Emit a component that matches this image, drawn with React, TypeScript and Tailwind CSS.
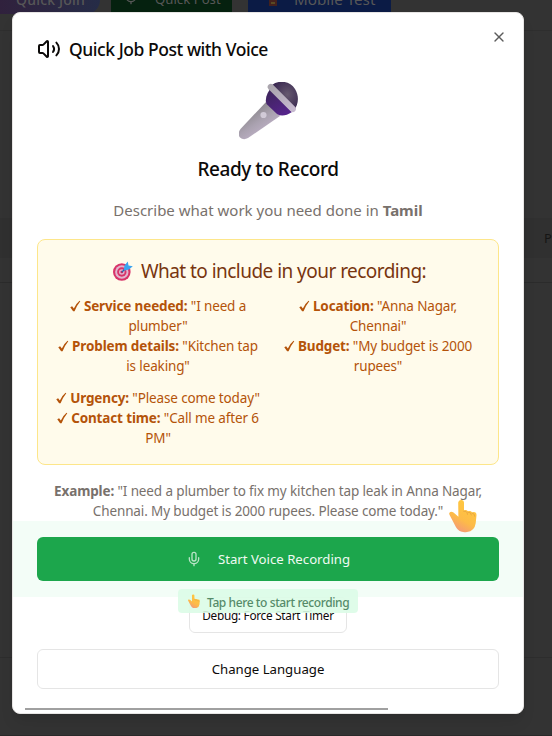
import React from "react";
import { Mic, Volume2, X } from "lucide-react";

function Microphone() {
  return (
    <svg width="60" height="58" viewBox="0 0 60 58" className="ml-0.5 block">
      <defs>
        <linearGradient id="micBody" x1="0.3" y1="0.2" x2="0.75" y2="0.8">
          <stop offset="0" stopColor="#8a868b" />
          <stop offset="0.5" stopColor="#aaa2b0" />
          <stop offset="1" stopColor="#c0b2c9" />
        </linearGradient>
        <radialGradient id="micHead" cx="0.6" cy="0.45" r="0.6">
          <stop offset="0" stopColor="#66596f" />
          <stop offset="1" stopColor="#3a2851" />
        </radialGradient>
        <linearGradient id="micNeck" x1="0" y1="0" x2="0.6" y2="1">
          <stop offset="0" stopColor="#3b2557" />
          <stop offset="1" stopColor="#55248a" />
        </linearGradient>
        <linearGradient id="micBand" x1="0" y1="0" x2="1" y2="1">
          <stop offset="0" stopColor="#aaa5ad" />
          <stop offset="1" stopColor="#c6b9cf" />
        </linearGradient>
      </defs>
      <path d="M27 20 L1.5 47 Q-2 52 1 55.5 Q4.5 58.5 9 56 L41 34 Z" fill="url(#micBody)" />
      <path d="M31 7 Q25 16 27.5 22 L38 32 Q44 36 53 30 Z" fill="url(#micNeck)" />
      <path d="M33 3 C40 -2.5 51 -1 56 7 C60.5 14 59.5 23 55 28 Z" fill="url(#micHead)" />
      <path d="M31.8 5 L53.8 27" stroke="url(#micBand)" strokeWidth="6.2" strokeLinecap="round" />
      <circle cx="24.5" cy="33" r="3.1" fill="#d1cad7" />
    </svg>
  );
}

function Target() {
  return (
    <svg width="20" height="20" viewBox="0 0 20 20" className="block shrink-0">
      <circle cx="8.8" cy="11" r="8.8" fill="#d83469" />
      <circle cx="8.8" cy="11" r="6.7" fill="#e2b5ce" />
      <circle cx="8.8" cy="11" r="4.7" fill="#d83469" />
      <circle cx="8.8" cy="11" r="2.8" fill="#dfb3cc" />
      <circle cx="8.8" cy="11" r="1.3" fill="#c52861" />
      <path d="M9 11 L15 5" stroke="#2466b0" strokeWidth="1.3" />
      <path d="M10.8 8.2 L11.5 4.5 L14.8 0.6 L15.5 4.4 L19.8 5.2 L16 8.6 L11.6 9.4 Z" fill="#3ba4ef" />
    </svg>
  );
}

function PointingHand({ size, id }: { size: number; id: string }) {
  return (
    <svg width={size} height={size * 1.2} viewBox="0 0 28 33" className="block shrink-0">
      <defs>
        <linearGradient id={id} x1="0.8" y1="0.1" x2="0.35" y2="1">
          <stop offset="0" stopColor="#ffc83f" />
          <stop offset="0.6" stopColor="#fdbb48" />
          <stop offset="1" stopColor="#f4977a" />
        </linearGradient>
      </defs>
      <path
        d="M9.2 3.2 Q9.5 .4 12.2 .6 Q15 .8 15 3.5 L15 11 Q17 10 19 12 Q21.6 11 23 13 Q27.6 11.8 27.5 16 L26.7 24 Q25.5 32 18 32.7 Q10.5 34 7 28 L1 16.5 Q-.8 13.7 1.3 12.7 Q3.6 12 6 14.5 L9.4 17.4 Z"
        fill={`url(#${id})`}
      />
      <path d="M14.8 12 Q18 11 18.5 15 M18.9 12.8 Q22 12.5 22.5 15.7 M23 13.8 Q25.8 13.8 25.8 17" fill="none" stroke="#e9a53f" strokeWidth="0.9" strokeLinecap="round" />
    </svg>
  );
}

function Check() {
  return (
    <svg width="11" height="12" viewBox="0 0 12 12" className="mr-[3px] inline-block align-[-1px]">
      <path d="M0.3 7.4 L2.3 6.2 L4.2 8.8 Q6.6 3.4 10.4 0.3 L11.2 0.8 Q7.4 5.5 5 11.6 L3.4 11.6 Z" fill="currentColor" />
    </svg>
  );
}

type Tip = { label: string; first: string; second?: string };

function TipItem({ label, first, second }: Tip) {
  return (
    <div className="whitespace-nowrap text-center leading-5">
      <Check />
      <b className="font-bold">{label}</b> {first}
      {second && (
        <>
          <br />
          {second}
        </>
      )}
    </div>
  );
}

export default function App() {
  return (
    <div className="relative h-[736px] w-[552px] overflow-hidden bg-[#333333] font-['Noto_Sans','Open_Sans',sans-serif] text-[#0c0a09]">
      <div className="flex h-[31px] items-start border-b border-[#2e2e2e] leading-none text-[#575757]">
        <div className="h-[14px] w-[100px] rounded-br-[14px] bg-linear-to-r from-[#30213d] to-[#252c47] pl-4">
          <span className="-mt-[7px] block whitespace-nowrap text-[14px] font-medium tracking-[0.2px]">Quick Join</span>
        </div>
        <div className="ml-[11px] flex h-[14px] w-[121px] bg-[#05210f]">
          <Mic className="-mt-[11px] ml-[12px] size-4" />
          <span className="-mt-[7px] ml-[16px] block whitespace-nowrap text-[13.2px]">Quick Post</span>
        </div>
        <div className="ml-4 flex h-[14px] w-[143px] bg-[#0b1b45]">
          <div className="ml-[21px] h-1.5 w-2 border-2 border-[#44211d] bg-[#594a24]" />
          <span className="-mt-[8px] ml-[17px] block whitespace-nowrap text-[15.2px]">Mobile Test</span>
        </div>
      </div>
      <div className="mt-[187px] flex h-[65px] border-b border-[#2b2b2b]">
        <div className="flex h-10 w-full justify-end bg-[#303030]">
          <div className="w-[8px] overflow-hidden pt-[11px] text-[13px] text-[#151515]">P</div>
        </div>
      </div>
      <div className="mt-[374px] border-t border-[#2d2d2d]" />
      <div className="mt-[77px] border-t border-[#292929]" />

      <div className="absolute left-3 top-3 h-[702px] w-[512px] overflow-hidden rounded-lg border border-[#e7e5e4] bg-white px-6 shadow-lg">
        <button className="absolute right-4 top-4 text-[#5c5c5c]">
          <X className="size-4" strokeWidth={2} />
        </button>

        <header className="mt-[23px] flex h-[26px] items-center gap-2">
          <Volume2 className="size-6" strokeWidth={2} />
          <h2 className="whitespace-nowrap text-[17.5px] font-medium leading-[25px] tracking-[-0.45px]">Quick Job Post with Voice</h2>
        </header>

        <div className="mt-[20px] flex flex-col items-center">
          <Microphone />
          <h3 className="mt-[15px] whitespace-nowrap text-[19px] font-medium leading-7 tracking-[-0.44px]">Ready to Record</h3>
          <p className="mt-[15px] whitespace-nowrap text-[15px] leading-6 text-[#78716c]">
            Describe what work you need done in <b className="font-bold">Tamil</b>
          </p>
        </div>

        <section className="mt-[17px] h-[226px] rounded-lg border border-[#fde68a] bg-[#fffbeb] px-4 pt-[17px]">
          <div className="flex h-7 items-center justify-center gap-2 pl-[3px] text-[#78350f]">
            <Target />
            <h4 className="whitespace-nowrap text-[19px] leading-7 tracking-[-0.54px]">What to include in your recording:</h4>
          </div>
          <div className="mt-[11px] grid grid-cols-2 gap-3 text-[13.5px] tracking-[-0.14px] text-[#b45309]">
            <div>
              <TipItem label="Service needed:" first={'"I need a'} second={'plumber"'} />
              <TipItem label="Problem details:" first={'"Kitchen tap'} second={'is leaking"'} />
            </div>
            <div>
              <TipItem label="Location:" first={'"Anna Nagar,'} second={'Chennai"'} />
              <TipItem label="Budget:" first={'"My budget is 2000'} second={'rupees"'} />
            </div>
            <div>
              <TipItem label="Urgency:" first={'"Please come today"'} />
              <TipItem label="Contact time:" first={'"Call me after 6'} second={'PM"'} />
            </div>
          </div>
        </section>

        <p className="mt-4 whitespace-nowrap text-center text-[13.5px] leading-5 tracking-[-0.13px] text-[#78716c]">
          <b className="font-bold">Example:</b> "I need a plumber to fix my kitchen tap leak in Anna Nagar,
          <br />
          Chennai. My budget is 2000 rupees. Please come today."
        </p>

        <div className="relative -mx-6 h-[76px] bg-[#f3fdf7] px-6 pt-4">
          <button className="flex h-11 w-full items-center justify-center gap-[16px] rounded-md bg-[#1ca64c] text-[13.2px] text-[#effaf2]">
            <Mic className="size-4 text-[#b8e3c6]" />
            <span className="whitespace-nowrap pt-px">Start Voice Recording</span>
          </button>
          <div className="absolute -top-[22px] left-[436px]">
            <PointingHand size={28} id="handLarge" />
          </div>
          <div className="absolute left-[165px] top-[68px] z-10 flex h-6 w-[180px] items-center rounded bg-[#dcfce7]/90 pl-2.5 text-[12px] text-[#568b69]">
            <PointingHand size={12} id="handSmall" />
            <span className="ml-[7px] whitespace-nowrap pt-[3px] font-medium tracking-[-0.4px]">Tap here to start recording</span>
          </div>
        </div>

        <div className="flex flex-col items-center">
          <button className="h-9 w-[158px] whitespace-nowrap rounded-md border border-[#e5e5e5] bg-white pt-0.5 text-[11.8px] tracking-[-0.28px]">Debug: Force Start Timer</button>
          <button className="mt-4 h-10 w-full rounded-md border border-[#e5e5e5] bg-white pt-0.5 text-[13.2px]">Change Language</button>
        </div>
        <div className="-ml-3 mt-[19px] h-[2px] w-[363px] bg-[#a0a0a0]" />
      </div>
    </div>
  );
}
